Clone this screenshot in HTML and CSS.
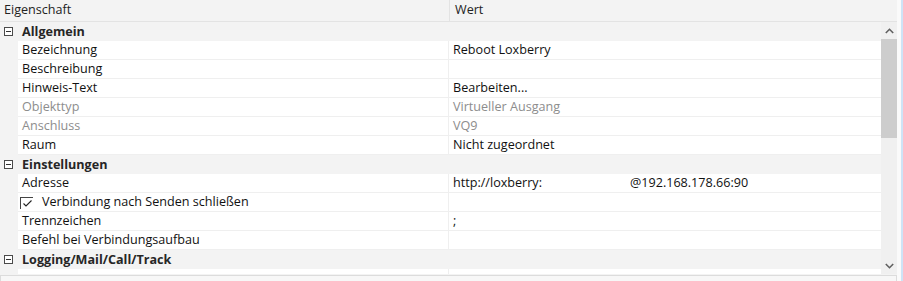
FILE: index.html
```html
<!DOCTYPE html>
<html lang="de">
<head>
    <meta charset="UTF-8">
    <title>Eigenschaften</title>
    <link rel="stylesheet" href="styles.css">
</head>
<body>

<div class="window">
    <div class="panel">
        <div class="grid-head">
            <div class="head-name">Eigenschaft</div>
            <div class="head-value">Wert</div>
        </div>

        <div class="grid-body">
            <div class="rows">
                <div class="row cat">
                    <span class="expander"></span>
                    <div class="name">Allgemein</div>
                </div>
                <div class="row">
                    <div class="name">Bezeichnung</div>
                    <div class="value">Reboot Loxberry</div>
                </div>
                <div class="row">
                    <div class="name">Beschreibung</div>
                    <div class="value"></div>
                </div>
                <div class="row">
                    <div class="name">Hinweis-Text</div>
                    <div class="value">Bearbeiten...</div>
                </div>
                <div class="row disabled">
                    <div class="name">Objekttyp</div>
                    <div class="value">Virtueller Ausgang</div>
                </div>
                <div class="row disabled">
                    <div class="name">Anschluss</div>
                    <div class="value">VQ9</div>
                </div>
                <div class="row">
                    <div class="name">Raum</div>
                    <div class="value">Nicht zugeordnet</div>
                </div>

                <div class="row cat">
                    <span class="expander"></span>
                    <div class="name">Einstellungen</div>
                </div>
                <div class="row">
                    <div class="name">Adresse</div>
                    <div class="value">http://loxberry:<span class="hidden-part"></span>@192.168.178.66:90</div>
                </div>
                <div class="row">
                    <div class="name check">
                        <span class="checkbox">
                            <svg width="9" height="7" viewBox="0 0 9 7"><path d="M0.5 3.5 L3 6 L8.5 0.5" fill="none" stroke="#222" stroke-width="1.1"/></svg>
                        </span>
                        Verbindung nach Senden schließen
                    </div>
                    <div class="value"></div>
                </div>
                <div class="row">
                    <div class="name">Trennzeichen</div>
                    <div class="value">;</div>
                </div>
                <div class="row">
                    <div class="name">Befehl bei Verbindungsaufbau</div>
                    <div class="value"></div>
                </div>

                <div class="row cat">
                    <span class="expander"></span>
                    <div class="name">Logging/Mail/Call/Track</div>
                </div>
                <div class="row partial">
                    <div class="name"></div>
                    <div class="value"></div>
                </div>
            </div>

            <div class="scrollbar">
                <div class="arrow">
                    <svg width="9" height="6" viewBox="0 0 9 6"><path d="M0.8 5 L4.5 1.3 L8.2 5" fill="none" stroke="#606060" stroke-width="1.6"/></svg>
                </div>
                <div class="track">
                    <div class="thumb"></div>
                </div>
                <div class="arrow">
                    <svg width="9" height="6" viewBox="0 0 9 6"><path d="M0.8 1 L4.5 4.7 L8.2 1" fill="none" stroke="#606060" stroke-width="1.6"/></svg>
                </div>
            </div>
        </div>

        <div class="footer"></div>
    </div>
    <div class="edge"></div>
</div>

</body>
</html>
```

FILE: styles.css
```css
body {
    margin: 0;
    background-color: #ffffff;
    font-family: "Open Sans", "Noto Sans", Arial, sans-serif;
    font-size: 12.6px;
    color: #111111;
}
.window {
    display: flex;
    width: 903px;
    height: 281px;
    overflow: hidden;
}
.panel {
    width: 897px;
    display: flex;
    flex-direction: column;
    background-color: #f3f3f3;
}
.edge {
    flex: 1;
    background-color: #fafafa;
    border-right: 2px solid #cfe3f6;
}
.grid-head {
    display: flex;
    height: 21px;
    line-height: 20px;
    border-bottom: 1px solid #e3e3e3;
    background-color: #f3f3f3;
    color: #222222;
}
.head-name {
    width: 445px;
    padding-left: 4px;
    border-right: 1px solid #e3e3e3;
}
.head-value {
    padding-left: 5px;
}
.grid-body {
    display: flex;
    height: 252px;
}
.rows {
    width: 881px;
    overflow: hidden;
    background-color: #f3f3f3;
}
.row {
    display: grid;
    grid-template-columns: 431px 1fr;
    height: 18px;
    line-height: 18px;
    margin-left: 18px;
    border-bottom: 1px solid #efefef;
    background-color: #ffffff;
    position: relative;
}
.row .name {
    padding-left: 4px;
    border-right: 1px solid #efefef;
    white-space: nowrap;
}
.row .value {
    padding-left: 4px;
    white-space: nowrap;
}
.row.disabled {
    color: #8d8d8d;
}
.row.cat {
    display: block;
    height: 19px;
    line-height: 19px;
    border-bottom: none;
    background-color: #f3f3f3;
    font-weight: 700;
    color: #262626;
}
.row.cat .name {
    border-right: none;
}
.expander {
    position: absolute;
    left: -14px;
    top: 5px;
    width: 7px;
    height: 7px;
    border: 1px solid #4a4a4a;
    background-color: #ffffff;
}
.expander::after {
    content: "";
    position: absolute;
    left: 1px;
    top: 3px;
    width: 5px;
    height: 1px;
    background-color: #333333;
}
.row .check {
    display: flex;
    align-items: center;
    padding-left: 2px;
}
.checkbox {
    display: inline-flex;
    align-items: center;
    justify-content: center;
    width: 12px;
    height: 11px;
    margin-right: 9px;
    border-left: 1px solid #444444;
    border-top: 1px solid #444444;
    margin-top: 1px;
}
.hidden-part {
    display: inline-block;
    width: 88px;
}
.row.partial {
    height: 6px;
    border-bottom: none;
}
.scrollbar {
    width: 16px;
    display: flex;
    flex-direction: column;
    background-color: #f0f0f0;
}
.arrow {
    height: 17px;
    display: flex;
    align-items: center;
    justify-content: center;
}
.track {
    flex: 1;
}
.thumb {
    height: 99px;
    background-color: #cdcdcd;
}
.footer {
    flex: 1;
    margin-top: 1px;
    border-top: 1px solid #dcdcdc;
    border-left: 1px solid #dcdcdc;
    border-right: 1px solid #dcdcdc;
    background-color: #f7f7f7;
}
```
